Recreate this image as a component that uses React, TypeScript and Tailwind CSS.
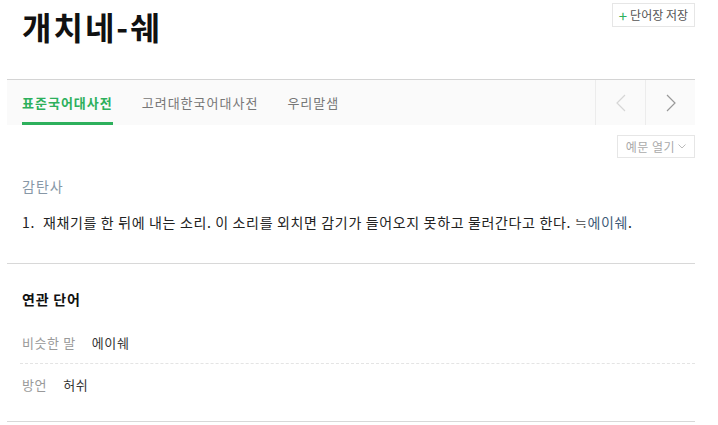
const font = { fontFamily: '"Noto Sans CJK KR", "Noto Sans", sans-serif' }

function Chevron({ dir, color }: { dir: 'left' | 'right'; color: string }) {
	return (
		<svg width="10" height="18" viewBox="0 0 10 18" fill="none" stroke={color} strokeWidth={1.2}>
			{dir === 'left' ? <path d="M9 1 L1 9 L9 17" /> : <path d="M1 1 L9 9 L1 17" />}
		</svg>
	)
}

export default function App() {
	return (
		<div className="min-h-screen bg-white" style={font}>
			<div className="ml-[7px] w-[688px]">
				{/* header */}
				<div className="flex h-[79px] justify-between">
					<h1 className="pl-[15px] pt-[7px] text-[32px] font-bold leading-[38px] tracking-[2px] text-[#111]">
						개치네-쉐
					</h1>
					<button
						type="button"
						className="mt-[3px] flex h-[24px] items-center gap-[3px] border border-[#e6e6e6] px-[6px] text-[12px] text-[#555]"
					>
						<span className="text-[15px] leading-none text-[#2db05c]">+</span>
						단어장 저장
					</button>
				</div>

				{/* tabs */}
				<div className="flex h-[46px] border-t border-[#d4d4d4] bg-[#fafafa]">
					<div className="flex flex-1 items-stretch gap-[29px] pl-[15px] text-[13px] tracking-[1px]">
						<div className="flex items-center border-b-[3px] border-[#2db05c] pt-[3px] font-bold text-[#2db05c]">
							표준국어대사전
						</div>
						<div className="flex items-center text-[#777]">고려대한국어대사전</div>
						<div className="flex items-center text-[#777]">우리말샘</div>
					</div>
					<div className="flex w-[50px] items-center justify-center border-l border-[#ececec]">
						<Chevron dir="left" color="#d6d6d6" />
					</div>
					<div className="flex w-[50px] items-center justify-center border-l border-[#ececec]">
						<Chevron dir="right" color="#999" />
					</div>
				</div>

				<div className="mt-[10px] flex justify-end">
					<button
						type="button"
						className="flex h-[23px] w-[78px] items-center justify-center gap-[3px] border border-[#e6e6e6] text-[12px] tracking-[0.5px] text-[#aaa]"
					>
						예문 열기
						<svg width="8" height="5" viewBox="0 0 8 5" fill="none" stroke="#bbb" strokeWidth={1}>
							<path d="M0.5 0.5 L4 4 L7.5 0.5" />
						</svg>
					</button>
				</div>

				{/* meaning */}
				<div className="px-[15px]">
					<p className="mt-[18px] text-[14px] leading-[20px] tracking-[1px] text-[#8797a6]">감탄사</p>
					<p className="mt-[16px] text-[14px] leading-[20px] tracking-[0.65px] text-[#222]">
						<span className="mr-[8px]">1.</span>
						재채기를 한 뒤에 내는 소리. 이 소리를 외치면 감기가 들어오지 못하고 물러간다고 한다.{' '}
						<span className="text-[#666]">≒</span>
						<span className="text-[#3d5a78]">에이쉐</span>.
					</p>
				</div>

				<div className="mt-[31px] border-t border-[#d8d8d8]" />

				{/* related */}
				<div className="pl-[13px]">
					<h2 className="mt-[25px] pl-[2px] text-[14px] font-bold leading-[20px] tracking-[0.8px] text-[#111]">
						연관 단어
					</h2>
					<div className="mt-[13px] flex h-[42px] items-center gap-[16px] border-b border-dashed border-[#e4e4e4] pl-[2px] text-[13px] tracking-[0.6px]">
						<span className="text-[#999]">비슷한 말</span>
						<span className="text-[#333]">에이쉐</span>
					</div>
					<div className="flex h-[42px] items-center gap-[16px] pl-[2px] text-[13px] tracking-[0.6px]">
						<span className="text-[#999]">방언</span>
						<span className="text-[#333]">허쉬</span>
					</div>
				</div>

				<div className="mt-[15px] border-t border-[#d8d8d8]" />
			</div>
		</div>
	)
}
